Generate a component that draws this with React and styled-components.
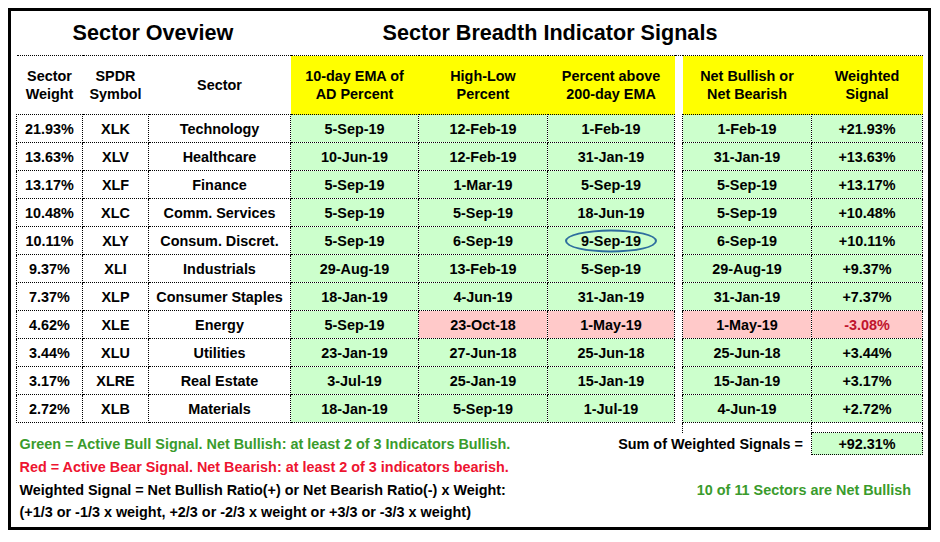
import React from 'react'
import styled, { createGlobalStyle } from 'styled-components'

const Global = createGlobalStyle`
  html, body { margin: 0; padding: 0; background: #fff; }
  body { font-family: "Liberation Sans", Arial, Helvetica, sans-serif; color: #000; }
`

const GREEN = '#ccffcc'
const PINK = '#ffc9c9'
const YELLOW = '#ffff00'
const DOT = '1px dotted #000'

const Frame = styled.div`
  margin: 8px 0 0 8px;
  width: 923px;
  height: 522px;
  box-sizing: border-box;
  border: 3px solid #000;
  padding: 0 6px 0 5px;
  font-weight: 700;
`

const TitleRow = styled.div`
  display: flex;
  height: 44px;
  align-items: center;
`

const Title = styled.h1`
  margin: 0;
  width: ${p => p.$w}px;
  text-align: center;
  font-size: 21.6px;
  font-weight: 700;
  white-space: nowrap;
`

const Table = styled.table`
  border-collapse: collapse;
  table-layout: fixed;
  width: 906px;
  font-size: 14.4px;
`

const HeadCell = styled.th`
  height: 58px;
  padding: 0;
  border-top: ${DOT};
  border-left: none;
  border-right: none;
  background: ${p => (p.$hi ? YELLOW : '#fff')};
  font-weight: 700;
  line-height: 18px;
  text-align: center;
  vertical-align: middle;
  white-space: nowrap;
`

const Cell = styled.td`
  position: relative;
  height: 27px;
  padding: 0;
  border: ${DOT};
  text-align: center;
  white-space: nowrap;
  background: ${p => (p.$tone === 'bull' ? GREEN : p.$tone === 'bear' ? PINK : '#fff')};
  color: ${p => (p.$neg ? '#c0142c' : '#000')};
`

const Gap = styled.td`
  padding: 0;
  border-top: none;
  border-bottom: none;
`

const Spacer = styled.td`
  height: ${p => p.$h || 9}px;
  padding: 0;
  border-left: ${p => (p.$sides ? DOT : 'none')};
  border-right: ${p => (p.$sides ? DOT : 'none')};
`

const Note = styled.td`
  height: ${p => p.$h || 22}px;
  padding: 0 0 0 3px;
  white-space: nowrap;
  text-align: ${p => p.$align || 'left'};
  color: ${p => (p.$color === 'green' ? '#3a9b2c' : p.$color === 'red' ? '#ee1430' : '#000')};
`

const SumLabel = styled.td`
  padding: 0 8px 0 0;
  text-align: right;
  white-space: nowrap;
`

const SumBox = styled.td`
  height: 21px;
  padding: 0;
  border: ${DOT};
  background: ${GREEN};
  text-align: center;
  white-space: nowrap;
`

const Ring = styled.span`
  position: absolute;
  left: 50%;
  top: 50%;
  width: 88px;
  height: 19px;
  transform: translate(-50%, -50%);
  border: 2px solid #2e6e9e;
  border-radius: 50%;
  pointer-events: none;
`

const cols = [66, 66, 142, 128, 129, 127, 8, 129, 111]

const rows = [
  ['21.93%', 'XLK', 'Technology', '5-Sep-19', '12-Feb-19', '1-Feb-19', '1-Feb-19', '+21.93%'],
  ['13.63%', 'XLV', 'Healthcare', '10-Jun-19', '12-Feb-19', '31-Jan-19', '31-Jan-19', '+13.63%'],
  ['13.17%', 'XLF', 'Finance', '5-Sep-19', '1-Mar-19', '5-Sep-19', '5-Sep-19', '+13.17%'],
  ['10.48%', 'XLC', 'Comm. Services', '5-Sep-19', '5-Sep-19', '18-Jun-19', '5-Sep-19', '+10.48%'],
  ['10.11%', 'XLY', 'Consum. Discret.', '5-Sep-19', '6-Sep-19', '9-Sep-19', '6-Sep-19', '+10.11%', { ring: true }],
  ['9.37%', 'XLI', 'Industrials', '29-Aug-19', '13-Feb-19', '5-Sep-19', '29-Aug-19', '+9.37%'],
  ['7.37%', 'XLP', 'Consumer Staples', '18-Jan-19', '4-Jun-19', '31-Jan-19', '31-Jan-19', '+7.37%'],
  ['4.62%', 'XLE', 'Energy', '5-Sep-19', '23-Oct-18', '1-May-19', '1-May-19', '-3.08%', { bear: [false, true, true], net: true }],
  ['3.44%', 'XLU', 'Utilities', '23-Jan-19', '27-Jun-18', '25-Jun-18', '25-Jun-18', '+3.44%'],
  ['3.17%', 'XLRE', 'Real Estate', '3-Jul-19', '25-Jan-19', '15-Jan-19', '15-Jan-19', '+3.17%'],
  ['2.72%', 'XLB', 'Materials', '18-Jan-19', '5-Sep-19', '1-Jul-19', '4-Jun-19', '+2.72%'],
]

function Row({ r }) {
  const [w, sym, name, a, b, c, net, sig, flags = {}] = r
  const bear = flags.bear || [false, false, false]
  return (
    <tr>
      <Cell>{w}</Cell>
      <Cell>{sym}</Cell>
      <Cell>{name}</Cell>
      {[a, b, c].map((d, i) => (
        <Cell key={i} $tone={bear[i] ? 'bear' : 'bull'}>
          {d}
          {i === 2 && flags.ring && <Ring />}
        </Cell>
      ))}
      <Gap />
      <Cell $tone={flags.net ? 'bear' : 'bull'}>{net}</Cell>
      <Cell $tone={flags.net ? 'bear' : 'bull'} $neg={flags.net}>{sig}</Cell>
    </tr>
  )
}

export default function App() {
  return (
    <>
      <Global />
      <Frame>
        <TitleRow>
          <Title $w={274}>Sector Oveview</Title>
          <Title $w={520}>Sector Breadth Indicator Signals</Title>
        </TitleRow>
        <Table>
          <colgroup>
            {cols.map((c, i) => <col key={i} style={{ width: c }} />)}
          </colgroup>
          <thead>
            <tr>
              <HeadCell>Sector<br />Weight</HeadCell>
              <HeadCell>SPDR<br />Symbol</HeadCell>
              <HeadCell>Sector</HeadCell>
              <HeadCell $hi>10-day EMA of<br />AD Percent</HeadCell>
              <HeadCell $hi>High-Low<br />Percent</HeadCell>
              <HeadCell $hi>Percent above<br />200-day EMA</HeadCell>
              <HeadCell />
              <HeadCell $hi>Net Bullish or<br />Net Bearish</HeadCell>
              <HeadCell $hi>Weighted<br />Signal</HeadCell>
            </tr>
          </thead>
          <tbody>
            {rows.map(r => <Row key={r[1]} r={r} />)}
            <tr>
              <Spacer colSpan={7} />
              <Spacer $sides />
              <Spacer $sides />
            </tr>
            <tr>
              <Note colSpan={5} $color="green">Green = Active Bull Signal. Net Bullish: at least 2 of 3 Indicators Bullish.</Note>
              <SumLabel colSpan={3}>Sum of Weighted Signals =</SumLabel>
              <SumBox>+92.31%</SumBox>
            </tr>
            <tr>
              <Note colSpan={9} $color="red" $h={23}>Red = Active Bear Signal. Net Bearish: at least 2 of 3 indicators bearish.</Note>
            </tr>
            <tr>
              <Note colSpan={5} $h={23}>Weighted Signal = Net Bullish Ratio(+) or Net Bearish Ratio(-) x Weight:</Note>
              <Note colSpan={2} />
              <Note colSpan={2} $color="green" $align="center">10 of 11 Sectors are Net Bullish</Note>
            </tr>
            <tr>
              <Note colSpan={9} $h={22}>(+1/3 or -1/3 x weight, +2/3 or -2/3 x weight or +3/3 or -3/3 x weight)</Note>
            </tr>
          </tbody>
        </Table>
      </Frame>
    </>
  )
}
